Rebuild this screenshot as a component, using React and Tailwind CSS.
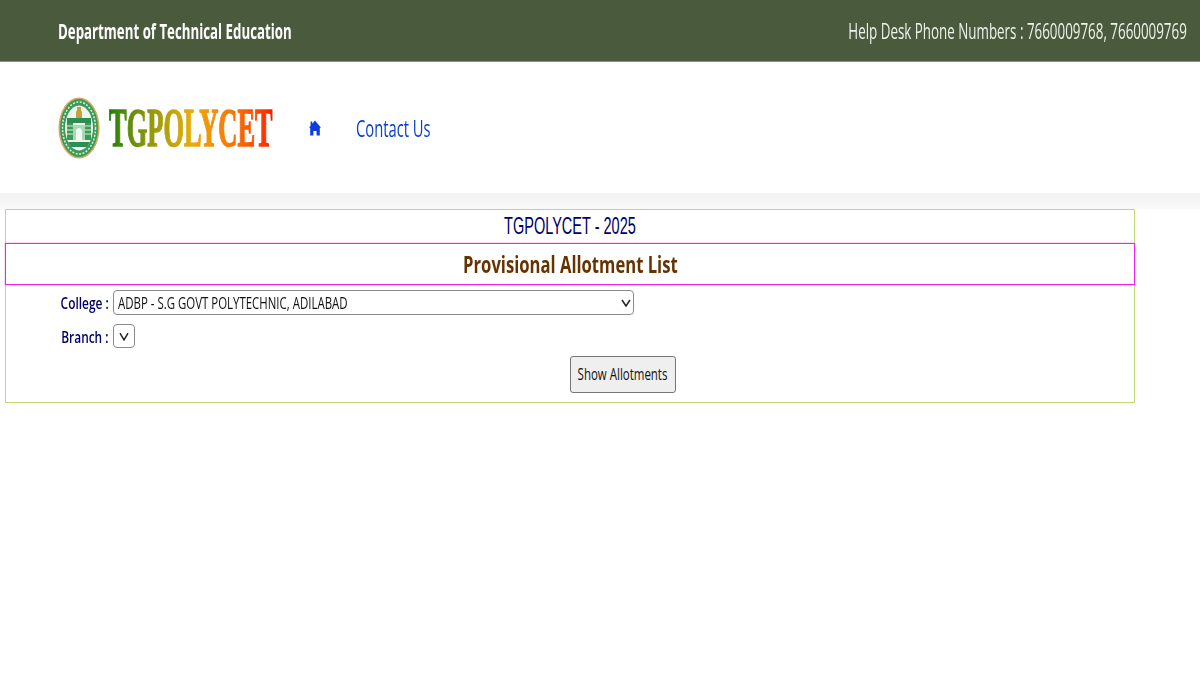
const OPEN = "font-['Open_Sans',sans-serif]";

function Emblem() {
  return (
    <svg width="42" height="62" viewBox="0 0 42 62" className="shrink-0">
      <ellipse cx="21" cy="31" rx="20.5" ry="30.5" fill="#d9a860" />
      <ellipse cx="21" cy="31" rx="19" ry="29" fill="#3c9a58" />
      <ellipse cx="21" cy="31" rx="16.5" ry="26" fill="none" stroke="#d8efd8" strokeWidth="1.5" strokeDasharray="2 1.5" />
      <ellipse cx="21" cy="31" rx="14" ry="22.5" fill="#eef7ee" />
      <path d="M19 10h4v3l1 2v6h-6v-6l1-2z" fill="#c9a040" />
      <rect x="9" y="21" width="24" height="5" fill="#2a8f50" />
      <path d="M9 26h6v17H9zM27 26h6v17h-6z" fill="#3c9a58" />
      <path d="M15 28h12v15H15z" fill="#a9d8b4" />
      <path d="M18 43V33q3-4 6 0v10z" fill="#f4faf4" />
      <path d="M9 29h6M9 33h6M9 37h6M27 29h6M27 33h6M27 37h6" stroke="#d8efd8" strokeWidth="1" />
      <path d="M10 45h22l-3 5H13z" fill="#2a8f50" />
    </svg>
  );
}

function HomeIcon() {
  return (
    <svg width="12" height="16" viewBox="0 0 12 15" className="shrink-0">
      <path d="M6 0 12 7.2h-1.2V15H7.6v-4.6H4.4V15H1.2V7.2H0L1.6 5.2V1h1.6v2.2z" fill="#0b3fe0" />
    </svg>
  );
}

function Chevron({ tall }) {
  return (
    <svg width="10" height={tall ? 9 : 8} viewBox="0 0 10 8" preserveAspectRatio="none" className="shrink-0">
      <path d="M1 1l4 6 4-6" fill="none" stroke="#222" strokeWidth="1.5" />
    </svg>
  );
}

function FormRow({ label, children, className }) {
  return (
    <div className={`flex items-center ${className}`}>
      <div className="w-[103px] flex justify-end">
        <span className={`${OPEN} whitespace-nowrap origin-right scale-x-[0.7] text-[17px] font-semibold leading-none text-[#000066]`}>
          {label}
        </span>
      </div>
      <div className="ml-[4px]">{children}</div>
    </div>
  );
}

export default function App() {
  return (
    <div className="min-h-[675px] bg-white">
      {/* top bar */}
      <div className={`${OPEN} h-[62px] bg-[#4a5a3d] border-b border-[#8a9580] flex items-center justify-between pl-[58px] pr-[13px] text-white`}>
        <span className="whitespace-nowrap origin-left scale-x-[0.603] text-[22px] font-bold">Department of Technical Education</span>
        <span className="whitespace-nowrap origin-right scale-x-[0.608] text-[22px] text-[#eef2ea]">Help Desk Phone Numbers : 7660009768, 7660009769</span>
      </div>

      {/* logo and nav */}
      <div className="h-[131px] flex items-center pl-[58px]">
        <Emblem />
        <div className="w-[168px] ml-[9px]">
          <span className="inline-block whitespace-nowrap origin-left scale-x-[0.49] font-['Liberation_Serif',serif] text-[54px] font-bold leading-none [-webkit-text-stroke:1.5px_transparent] bg-gradient-to-r from-[#14800a] via-[#e8ac0c] to-[#ff1200] bg-clip-text text-transparent">
            TGPOLYCET
          </span>
        </div>
        <div className="ml-[32px]"><HomeIcon /></div>
        <a className={`${OPEN} ml-[35px] whitespace-nowrap origin-left scale-x-[0.615] text-[24px] font-medium text-[#0b3fd0]`}>Contact Us</a>
      </div>

      <div className="h-[16px] bg-gradient-to-b from-[#f2f2f2] to-[#fafafa]" />

      {/* allotment form */}
      <div className="ml-[5px] w-[1130px] h-[194px] border border-[#c2d870]">
        <div className="h-[33px] flex items-center justify-center">
          <span className="whitespace-nowrap scale-x-[0.605] -translate-y-[1px] font-['Liberation_Sans',sans-serif] text-[24px] text-[#000066]">TGPOLYCET - 2025</span>
        </div>
        <div className="-mx-px h-[42px] border border-[#ee22ee] shadow-[0_0_1px_#ee22ee] flex items-center justify-center">
          <span className={`${OPEN} whitespace-nowrap scale-x-[0.723] text-[23px] font-bold text-[#663300]`}>Provisional Allotment List</span>
        </div>
        <FormRow label="College :" className="mt-[5px]">
          <div className="w-[521px] h-[25px] flex items-center justify-between bg-white border border-[#8a8a8a] rounded-[4px] pl-[4px] pr-[2px]">
            <span className={`${OPEN} whitespace-nowrap origin-left scale-x-[0.715] text-[16px] text-[#111]`}>ADBP - S.G GOVT POLYTECHNIC, ADILABAD</span>
            <Chevron />
          </div>
        </FormRow>
        <FormRow label="Branch :" className="mt-[9px]">
          <div className="w-[22px] h-[24px] flex items-center justify-center bg-white border border-[#8a8a8a] rounded-[4px]">
            <Chevron tall />
          </div>
        </FormRow>
        <div className="mt-[8px] pl-[564px]">
          <button className="w-[106px] h-[37px] flex items-center justify-center bg-[#efefef] border border-[#767676] rounded-[3px]">
            <span className={`${OPEN} whitespace-nowrap scale-x-[0.675] -translate-y-[1px] text-[17px] text-[#111]`}>Show Allotments</span>
          </button>
        </div>
      </div>
    </div>
  );
}
